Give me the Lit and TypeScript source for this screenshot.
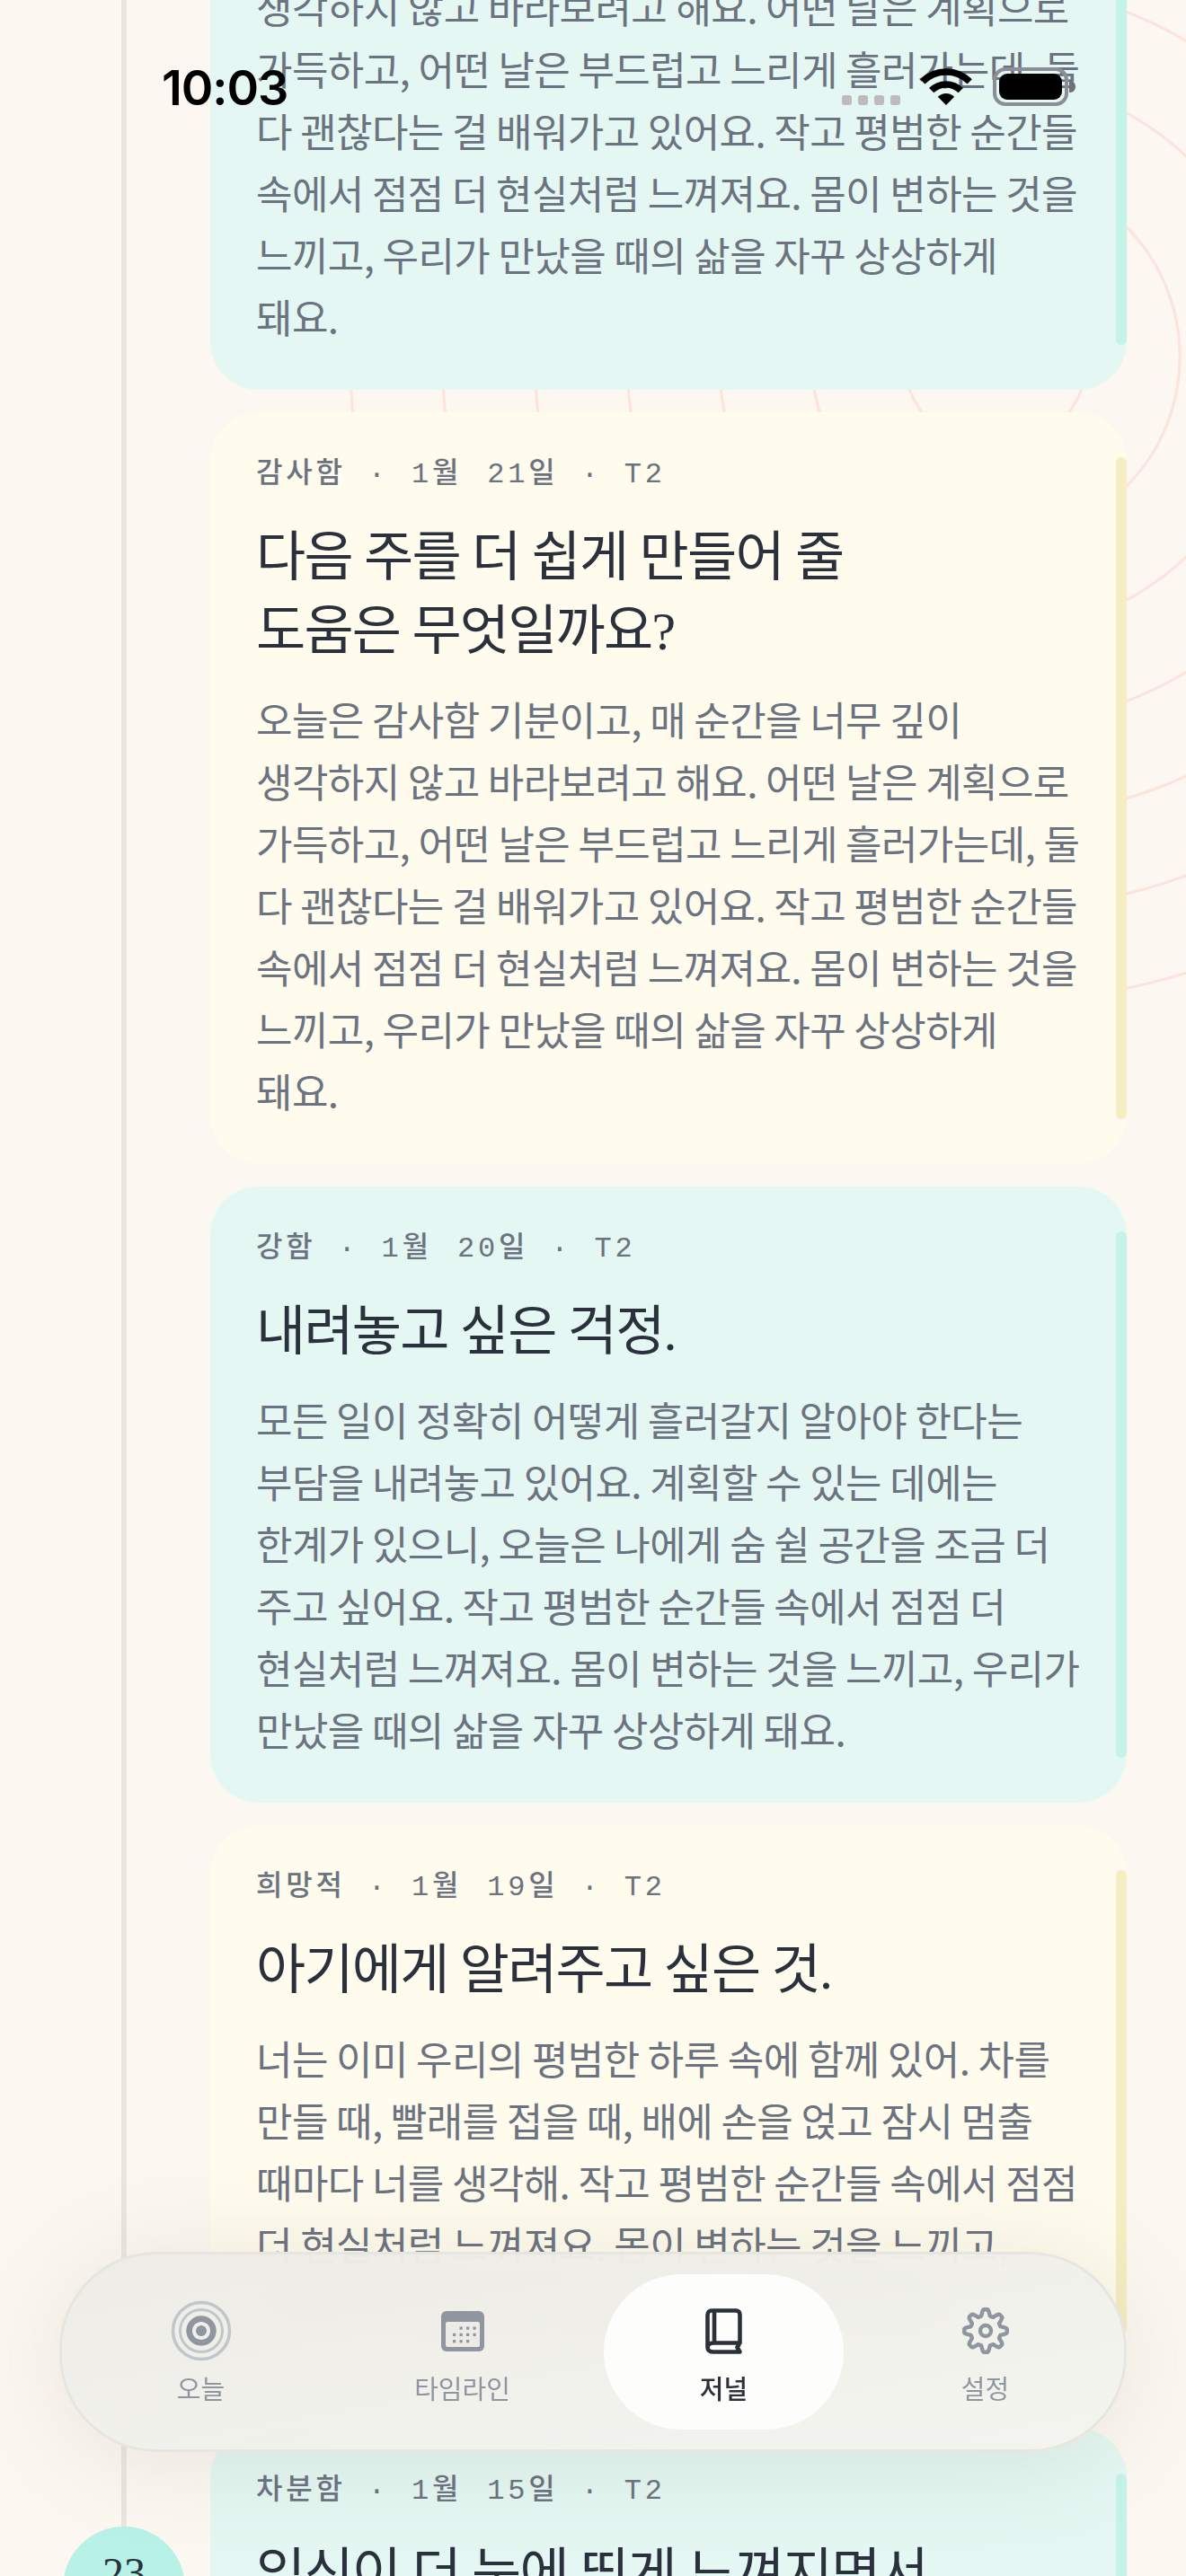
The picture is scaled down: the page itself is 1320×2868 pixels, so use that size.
import { css, html, LitElement, svg } from "lit";
import { customElement } from "lit/decorators.js";

const reflection = [
	"생각하지 않고 바라보려고 해요. 어떤 날은 계획으로",
	"가득하고, 어떤 날은 부드럽고 느리게 흘러가는데, 둘",
	"다 괜찮다는 걸 배워가고 있어요. 작고 평범한 순간들",
	"속에서 점점 더 현실처럼 느껴져요. 몸이 변하는 것을",
	"느끼고, 우리가 만났을 때의 삶을 자꾸 상상하게",
	"돼요.",
];

type Entry = {
	tone: "mint" | "butter";
	meta?: string[];
	title?: string[];
	body: string[];
	cut?: boolean;
	later?: boolean;
};

const entries: Entry[] = [
	{ tone: "mint", body: reflection, cut: true },
	{
		tone: "butter",
		meta: ["감사함", "1월 21일", "T2"],
		title: ["다음 주를 더 쉽게 만들어 줄", "도움은 무엇일까요?"],
		body: ["오늘은 감사함 기분이고, 매 순간을 너무 깊이", ...reflection],
	},
	{
		tone: "mint",
		meta: ["강함", "1월 20일", "T2"],
		title: ["내려놓고 싶은 걱정."],
		body: [
			"모든 일이 정확히 어떻게 흘러갈지 알아야 한다는",
			"부담을 내려놓고 있어요. 계획할 수 있는 데에는",
			"한계가 있으니, 오늘은 나에게 숨 쉴 공간을 조금 더",
			"주고 싶어요. 작고 평범한 순간들 속에서 점점 더",
			"현실처럼 느껴져요. 몸이 변하는 것을 느끼고, 우리가",
			"만났을 때의 삶을 자꾸 상상하게 돼요.",
		],
	},
	{
		tone: "butter",
		meta: ["희망적", "1월 19일", "T2"],
		title: ["아기에게 알려주고 싶은 것."],
		body: [
			"너는 이미 우리의 평범한 하루 속에 함께 있어. 차를",
			"만들 때, 빨래를 접을 때, 배에 손을 얹고 잠시 멈출",
			"때마다 너를 생각해. 작고 평범한 순간들 속에서 점점",
			"더 현실처럼 느껴져요. 몸이 변하는 것을 느끼고,",
			"우리가 만났을 때의 삶을 자꾸 상상하게 돼요.",
		],
	},
	{
		tone: "mint",
		meta: ["차분함", "1월 15일", "T2"],
		title: ["임신이 더 눈에 띄게 느껴지면서"],
		body: [],
		later: true,
	},
];

// eight soft lobes, sampled as a closed line
const gearPath = () => {
	const points: string[] = [];
	for (let i = 0; i < 160; i++) {
		const a = (i / 160) * Math.PI * 2;
		const wave = Math.max(-1, Math.min(1, Math.cos(a * 8) * 1.5));
		const r = 20.4 + wave * 3.4;
		points.push(`${(26 + r * Math.sin(a)).toFixed(2)} ${(26 - r * Math.cos(a)).toFixed(2)}`);
	}
	return `M${points.join("L")}Z`;
};

const todayIcon = html`<svg width="70" height="70" viewBox="0 0 70 70">
	<circle cx="35" cy="35" r="31.5" fill="none" stroke="#c0c7ca" stroke-width="3.5"></circle>
	<circle cx="35" cy="35" r="23.5" fill="none" stroke="#c0c7ca" stroke-width="3"></circle>
	<circle cx="35" cy="35" r="13.4" fill="none" stroke="#8f96a0" stroke-width="6.6"></circle>
	<circle cx="35" cy="35" r="6" fill="#8f96a0"></circle>
</svg>`;

const calendarDots = [
	[1, 0], [2, 0], [3, 0],
	[0, 1], [1, 1], [2, 1], [3, 1],
	[0, 2], [1, 2], [2, 2],
];

const calendarIcon = html`<svg width="48" height="45" viewBox="0 0 48 45">
	<rect width="48" height="45" rx="6" fill="#8f96a0"></rect>
	<rect x="5" y="12" width="38" height="28" rx="2" fill="#ecebe6"></rect>
	${calendarDots.map(
		([c, r]) => svg`<rect x=${13 + c * 7.5} y=${17.5 + r * 7.3} width="3.2" height="3.2" fill="#8f96a0"></rect>`,
	)}
</svg>`;

const bookIcon = html`<svg width="41" height="51" viewBox="0 0 41 51">
	<path
		d="M10 38.5V2.5M38.5 38.5H9.5C5.5 38.5 2.5 40 2.5 43.5C2.5 46.5 5 48.5 9 48.5H38.5L35.5 43.5L38.5 38.5V7C38.5 4.5 37 2.5 34 2.5H7C4.5 2.5 2.5 4.5 2.5 7V43.5"
		fill="none"
		stroke="#2b303b"
		stroke-width="4.6"
		stroke-linejoin="round"
		stroke-linecap="round"
	></path>
</svg>`;

const gearIcon = html`<svg width="52" height="52" viewBox="0 0 52 52">
	<path d=${gearPath()} fill="none" stroke="#8f96a0" stroke-width="4.4" stroke-linejoin="round"></path>
	<circle cx="26" cy="26" r="6" fill="none" stroke="#8f96a0" stroke-width="4.4"></circle>
</svg>`;

const tabs = [
	{ label: "오늘", icon: todayIcon },
	{ label: "타임라인", icon: calendarIcon },
	{ label: "저널", icon: bookIcon, active: true },
	{ label: "설정", icon: gearIcon },
];

const ringRadii = [1, 2, 3, 4, 5, 6, 7].map((k) => k * 102.6);

@customElement("app-root")
export class AppRoot extends LitElement {
	static override styles = css`
		:host {
			display: block;
			position: relative;
			width: 1320px;
			height: 2868px;
			overflow: hidden;
			background: #fcf7f0;
			font-family: "Noto Sans CJK KR", "Noto Sans", sans-serif;
		}

		.rings {
			position: absolute;
			left: 0;
			top: 0;
		}

		.spine {
			position: absolute;
			left: 135px;
			top: 0;
			width: 6px;
			height: 2830px;
			background: #e9e6e0;
		}

		.week {
			position: absolute;
			left: 70px;
			top: 2813px;
			box-sizing: border-box;
			width: 136px;
			height: 136px;
			padding-top: 24px;
			border-radius: 50%;
			background: #b8f2e6;
			color: #2a303c;
			font: 48px / 56px "Liberation Serif", serif;
			text-align: center;
		}

		.list {
			position: relative;
			display: flex;
			flex-direction: column;
			gap: 25px;
			width: 1020px;
			margin: -121px 0 0 234px;
		}

		.card {
			position: relative;
			padding: 50px 40px 47px 51px;
			border-radius: 54px;
		}

		.card.cut {
			padding-top: 94px;
		}

		.card.later {
			margin-top: 30px;
		}

		.mint {
			background: #e4f7f2;
		}

		.butter {
			background: #fffbed;
		}

		.bar {
			position: absolute;
			top: 50px;
			right: 0;
			bottom: 50px;
			width: 12px;
			border-radius: 6px;
		}

		.mint .bar {
			background: #c5f3e8;
		}

		.butter .bar {
			background: #f6edc3;
		}

		.meta {
			display: flex;
			height: 40px;
			align-items: center;
			color: #6b7280;
			font: 500 32px / 40px "Liberation Mono", "Noto Sans CJK KR", monospace;
			letter-spacing: 0.12em;
			word-spacing: 5px;
			white-space: pre;
		}

		.dot {
			margin: 0 25px;
		}

		.title {
			margin: 31px 0 22px;
			color: #2a303c;
			font: 400 60px / 82px "Liberation Serif", "Noto Sans CJK KR", serif;
			letter-spacing: -1.8px;
		}

		.title span,
		.body span {
			display: block;
			white-space: nowrap;
		}

		.body {
			margin: 0;
			color: #6b7280;
			font-size: 44px;
			line-height: 69px;
			letter-spacing: -0.6px;
			font-weight: 400;
		}

		.status {
			position: absolute;
			inset: 0 0 auto 0;
			height: 0;
		}

		.time {
			position: absolute;
			left: 180px;
			top: 66px;
			color: #000;
			font: 600 54px / 64px Inter, sans-serif;
			letter-spacing: -0.02em;
		}

		.signal {
			position: absolute;
			left: 937px;
			top: 106px;
			display: flex;
			gap: 7px;
		}

		.signal i {
			width: 11px;
			height: 11px;
			border-radius: 3px;
			background: #bcbcbc;
		}

		.wifi {
			position: absolute;
			left: 1023px;
			top: 75px;
		}

		.battery {
			position: absolute;
			left: 1105px;
			top: 75px;
			box-sizing: border-box;
			display: flex;
			width: 84px;
			height: 43px;
			padding: 3px;
			border: 4px solid #8a8f96;
			border-radius: 14px;
		}

		.battery b {
			flex: 1;
			border-radius: 9px;
			background: #000;
		}

		.battery::after {
			content: "";
			position: absolute;
			right: -12px;
			top: 11px;
			width: 7px;
			height: 13px;
			border-radius: 0 6px 6px 0;
			background: #6e7278;
		}

		.nav {
			position: absolute;
			left: 66px;
			top: 2507px;
			box-sizing: border-box;
			display: flex;
			width: 1188px;
			height: 223px;
			padding: 22px 9px;
			border: 3px solid #e6e5df;
			border-radius: 108px;
			background: linear-gradient(170deg, rgba(236, 235, 229, 0.94), rgba(244, 244, 239, 0.94));
			backdrop-filter: blur(30px);
			box-shadow: 0 10px 110px rgba(110, 115, 90, 0.14);
		}

		.tab {
			display: flex;
			flex: 1;
			flex-direction: column;
			align-items: center;
			margin: 0 12px;
			color: #8f96a0;
			font-size: 29px;
			line-height: 40px;
		}

		.tab.active {
			border-radius: 87px;
			background: #fdfdfb;
			color: #2b303b;
			font-weight: 500;
		}

		.icon {
			display: flex;
			height: 66px;
			align-items: center;
			margin: 30px 0 10px;
		}
	`;

	private renderCard(entry: Entry) {
		return html`<article class="card ${entry.tone} ${entry.cut ? "cut" : ""} ${entry.later ? "later" : ""}">
			<div class="bar"></div>
			${entry.meta
				? html`<div class="meta">
						${entry.meta.map(
							(part, i) => html`${i ? html`<span class="dot">·</span>` : ""}<span>${part}</span>`,
						)}
					</div>`
				: ""}
			${entry.title ? html`<h2 class="title">${entry.title.map((l) => html`<span>${l}</span>`)}</h2>` : ""}
			<p class="body">${entry.body.map((l) => html`<span>${l}</span>`)}</p>
		</article>`;
	}

	override render() {
		return html`
			<svg class="rings" width="1320" height="1200" viewBox="0 0 1320 1200">
				${ringRadii.map(
					(r) => svg`<circle cx="1108" cy="397" r=${r} fill="none" stroke="#fde3dc" stroke-width="3"></circle>`,
				)}
			</svg>
			<div class="spine"></div>
			<div class="week">23</div>
			<main class="list">${entries.map((e) => this.renderCard(e))}</main>
			<div class="status">
				<span class="time">10:03</span>
				<div class="signal"><i></i><i></i><i></i><i></i></div>
				<svg class="wifi" width="60" height="42" viewBox="0 0 60 42">
					<path d="M3.8 15.8A37 37 0 0 1 56.2 15.8M13.7 25.7A23 23 0 0 1 46.3 25.7" fill="none" stroke="#000" stroke-width="7.5"></path>
					<path d="M30 42L20.8 32.8A13 13 0 0 1 39.2 32.8Z" fill="#000"></path>
				</svg>
				<div class="battery"><b></b></div>
			</div>
			<nav class="nav">
				${tabs.map(
					(t) => html`<div class="tab ${t.active ? "active" : ""}">
						<div class="icon">${t.icon}</div>
						<span>${t.label}</span>
					</div>`,
				)}
			</nav>
		`;
	}
}
